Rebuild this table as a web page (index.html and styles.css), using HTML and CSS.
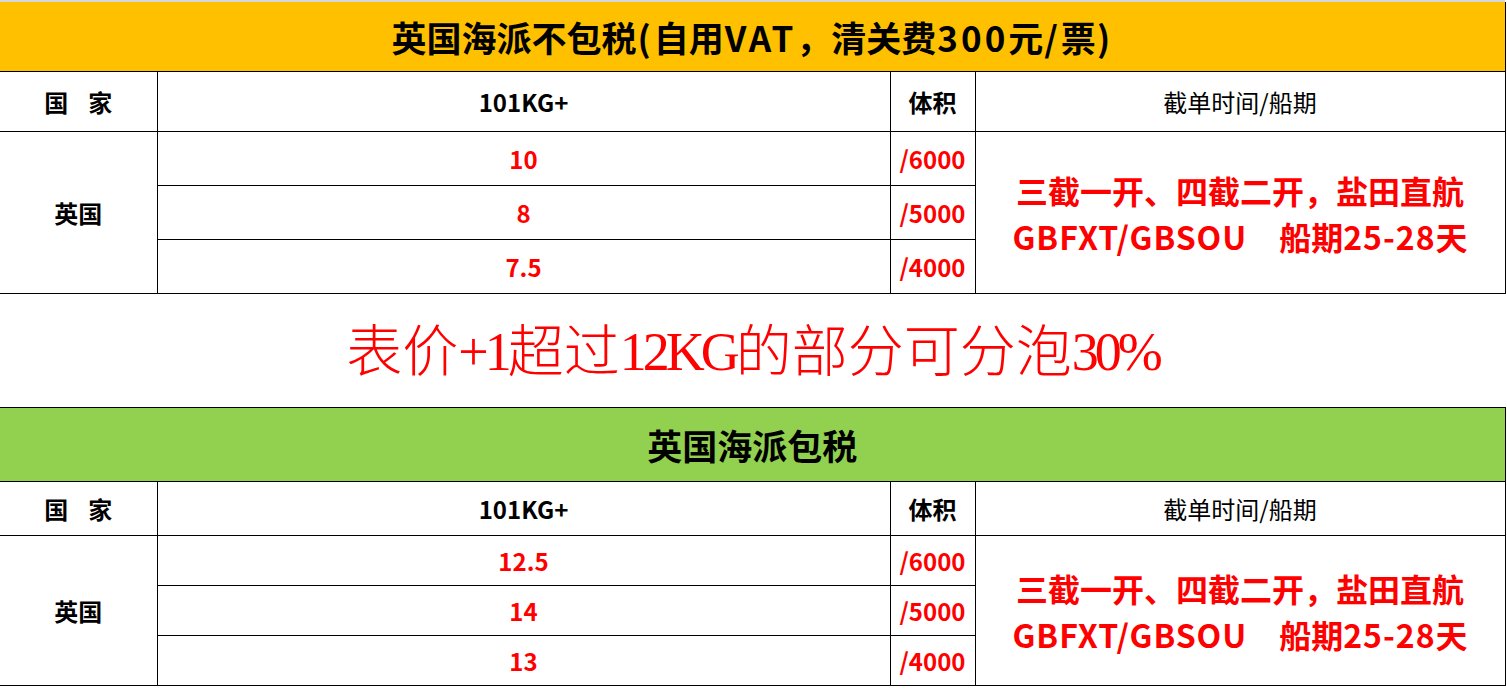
FILE: index.html
```html
<!DOCTYPE html>
<html lang="zh-CN">
<head>
<meta charset="utf-8">
<title>英国海派</title>
<link rel="stylesheet" href="styles.css">
</head>
<body>
<div class="sheet">
  <div class="gridtop"></div>
  <table class="rate rate-first">
    <colgroup><col class="c1"><col class="c2"><col class="c3"><col class="c4"></colgroup>
    <tr class="title-row yellow"><td colspan="4">英国海派不包税<span class="tl">(</span>自用<span class="tl">VAT</span>，清关费<span class="tl">300</span>元<span class="tl">/</span>票<span class="tl">)</span></td></tr>
    <tr class="head-row">
      <td class="b"><span class="w">国</span>家</td>
      <td class="b">101KG+</td>
      <td class="b">体积</td>
      <td class="reg">截单时间/船期</td>
    </tr>
    <tr class="data-row">
      <td rowspan="3" class="b">英国</td>
      <td class="red">10</td>
      <td class="red">/6000</td>
      <td rowspan="3" class="info">三截一开、四截二开，盐田直航<br><span class="il">GBFXT/GBSOU</span>　船期<span class="il">25-28</span>天</td>
    </tr>
    <tr class="data-row"><td class="red">8</td><td class="red">/5000</td></tr>
    <tr class="data-row"><td class="red">7.5</td><td class="red">/4000</td></tr>
  </table>
  <div class="note">表价<span class="lat">+1</span>超过<span class="lat">12KG</span>的部分可分泡<span class="lat">30%</span></div>
  <table class="rate rate-second">
    <colgroup><col class="c1"><col class="c2"><col class="c3"><col class="c4"></colgroup>
    <tr class="title-row green"><td colspan="4">英国海派包税</td></tr>
    <tr class="head-row">
      <td class="b"><span class="w">国</span>家</td>
      <td class="b">101KG+</td>
      <td class="b">体积</td>
      <td class="reg">截单时间/船期</td>
    </tr>
    <tr class="data-row">
      <td rowspan="3" class="b">英国</td>
      <td class="red">12.5</td>
      <td class="red">/6000</td>
      <td rowspan="3" class="info">三截一开、四截二开，盐田直航<br><span class="il">GBFXT/GBSOU</span>　船期<span class="il">25-28</span>天</td>
    </tr>
    <tr class="data-row"><td class="red">14</td><td class="red">/5000</td></tr>
    <tr class="data-row"><td class="red">13</td><td class="red">/4000</td></tr>
  </table>
</div>
</body>
</html>
```

FILE: styles.css
```css
html, body {
  margin: 0;
  padding: 0;
  background: #ffffff;
}

body {
  font-family: "Noto Sans CJK SC", "Noto Sans", sans-serif;
  color: #000000;
}

.sheet {
  width: 1507px;
}

.gridtop {
  height: 2px;
  width: 1505px;
  background: #d6d6d6;
}

.rate {
  border-collapse: collapse;
  table-layout: fixed;
  width: 1505px;
}

.c1 { width: 157px; }
.c2 { width: 733px; }
.c3 { width: 85px; }
.c4 { width: 530px; }

.rate td {
  border: 1px solid #000000;
  padding: 0;
  text-align: center;
  vertical-align: middle;
  white-space: nowrap;
  font-size: 24px;
  line-height: 28px;
}

.rate tr > td:first-child {
  border-left: none;
}

.rate-first .title-row td {
  border-top: none;
}

.title-row td {
  font-size: 35px;
  font-weight: 700;
  line-height: 40px;
}

.tl {
  letter-spacing: 3px;
  margin-left: 1px;
}

.rate-first .title-row td { height: 69px; }
.rate-second .title-row td { height: 73px; }

.yellow td { background: #ffc000; }
.green td { background: #92d050; }

.rate-first .head-row td { height: 59px; }
.rate-second .head-row td { height: 53px; }

.rate-first .data-row td { height: 53px; }
.rate-second .data-row td { height: 49px; }

.b { font-weight: 700; }
.reg { font-weight: 400; }

.w { margin-right: 20px; }

.red {
  color: #ff0000;
  font-weight: 700;
}

.info {
  color: #ff0000;
  font-weight: 700;
  font-size: 32px !important;
  line-height: 46px !important;
}

.il {
  letter-spacing: 1px;
}

.note {
  height: 113px;
  width: 1505px;
  display: flex;
  align-items: center;
  justify-content: center;
  color: #ff0000;
  font-family: "Liberation Serif", "Noto Sans CJK SC", serif;
  font-weight: 300;
  font-size: 56px;
  line-height: 60px;
  padding-top: 2px;
  box-sizing: border-box;
}

.lat {
  letter-spacing: -4px;
  font-size: 54px;
}
```
